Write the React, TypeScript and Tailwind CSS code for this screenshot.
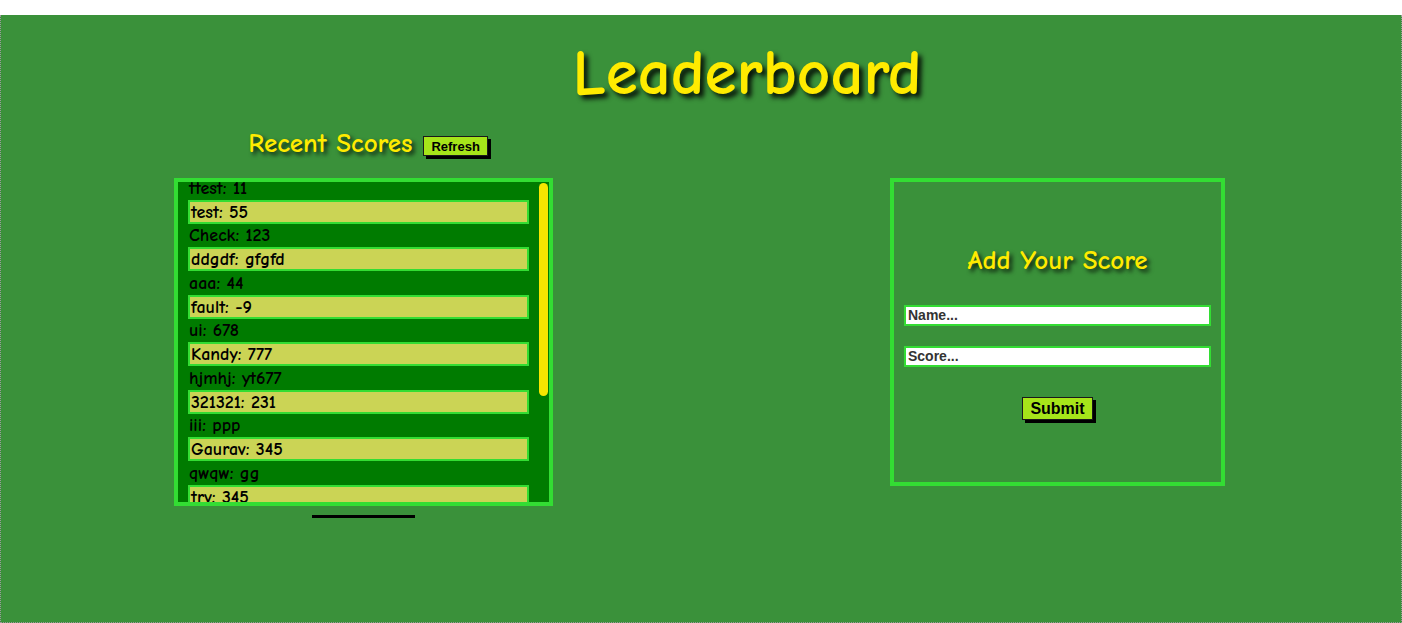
import { useState } from "react";

const SCORES: [string, string][] = [
  ["ttest", "11"],
  ["test", "55"],
  ["Check", "123"],
  ["ddgdf", "gfgfd"],
  ["aaa", "44"],
  ["fault", "-9"],
  ["ui", "678"],
  ["Kandy", "777"],
  ["hjmhj", "yt677"],
  ["321321", "231"],
  ["iii", "ppp"],
  ["Gaurav", "345"],
  ["qwqw", "gg"],
  ["trv", "345"],
  ["abc", "12"],
  ["zed", "90"],
];

const comic = "font-['Comic_Sans_MS','Comic_Neue','Open_Sans',sans-serif]";
const arial = "font-['Liberation_Sans',Arial,sans-serif]";

export default function App() {
  const [name, setName] = useState("");
  const [score, setScore] = useState("");

  return (
    <div className="bg-white pt-[15px]">
      <main
        className={`h-[608px] bg-[#3a913a] border border-t-0 border-dotted border-[#9a9a9a] ${comic}`}
      >
        <h1 className="pt-[20px] pl-[92px] text-center text-[65px] leading-[76px] font-bold text-[#ffeb00] [text-shadow:4px_4px_5px_rgba(0,0,0,0.9)]">
          Leaderboard
        </h1>

        <div className="grid grid-cols-[379px_335px] justify-between pl-[173px] pr-[176px]">
          <div className="mt-[14px] h-[38px] flex items-center justify-center gap-[11px] pl-[9px]">
            <h2 className="text-[27px] font-bold text-[#ffeb00] [text-shadow:3px_3px_4px_rgba(0,0,0,0.8)]">
              Recent Scores
            </h2>
            <button
              className={`mt-[4px] h-[20px] px-[7px] bg-[#a6e51a] border border-[#1a1a1a] text-[13px] font-bold text-black leading-none shadow-[3px_3px_0_#000] ${arial}`}
            >
              Refresh
            </button>
          </div>
          <div />

          <div className="mt-[15px] flex flex-col items-center">
            <div className="w-[379px] h-[328px] border-4 border-[#33dd33] bg-[#007b00] flex">
              <div className="w-[361px] pl-[10px] pr-[10px] overflow-hidden">
                <ul className="-mt-[6px]">
                  {SCORES.map(([n, s], i) =>
                    i % 2 === 1 ? (
                      <li
                        key={i}
                        className="h-[24px] px-[1px] pt-[1px] flex items-center border-2 border-[#33dd33] bg-[#cbd455] text-[18px] font-bold text-black"
                      >
                        {n}: {s}
                      </li>
                    ) : (
                      <li
                        key={i}
                        className="h-[23.5px] pl-[1px] pt-[1px] flex items-center text-[18px] font-bold text-black"
                      >
                        {n}: {s}
                      </li>
                    )
                  )}
                </ul>
              </div>
              <div className="w-[10px] pt-[1px] pr-[1px]">
                <div className="w-[9px] h-[213px] rounded-full bg-[#f6e600]" />
              </div>
            </div>
            <div className="mt-[9px] w-[103px] h-[3px] bg-black" />
          </div>

          <div className="mt-[15px] w-[335px] h-[308px] border-4 border-[#33dd33] flex flex-col items-center">
            <h2 className="mt-[62px] text-[27px] leading-[34px] font-bold text-[#ffeb00] [text-shadow:3px_3px_4px_rgba(0,0,0,0.8)]">
              Add Your Score
            </h2>
            <input
              value={name}
              onChange={(e) => setName(e.target.value)}
              placeholder="Name..."
              className={`mt-[27px] w-[307px] h-[21px] px-[2px] bg-white border-2 border-[#33dd33] text-[14px] font-semibold text-black placeholder:text-[#333] outline-none ${arial}`}
            />
            <input
              value={score}
              onChange={(e) => setScore(e.target.value)}
              placeholder="Score..."
              className={`mt-[20px] w-[307px] h-[21px] px-[2px] bg-white border-2 border-[#33dd33] text-[14px] font-semibold text-black placeholder:text-[#333] outline-none ${arial}`}
            />
            <button
              className={`mt-[30px] h-[23px] px-[7px] bg-[#a6e51a] border border-[#1a1a1a] text-[16px] font-bold text-black leading-none shadow-[3px_3px_0_#000] ${arial}`}
            >
              Submit
            </button>
          </div>
        </div>
      </main>
    </div>
  );
}
